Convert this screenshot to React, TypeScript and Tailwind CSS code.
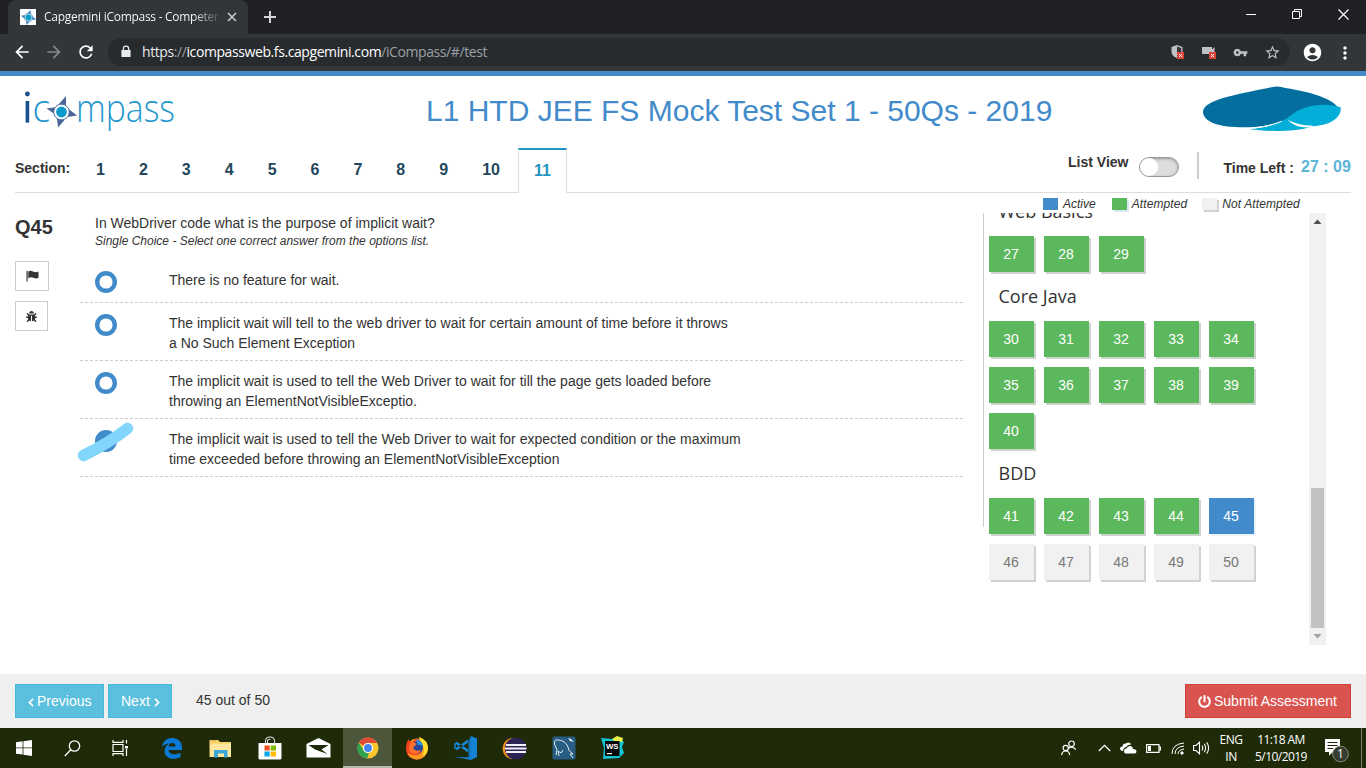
import type { ReactNode } from "react";
import { FaBug, FaPowerOff } from "react-icons/fa";
import { MdVpnKey, MdStarBorder, MdAccountCircle, MdMoreVert, MdArrowBack, MdArrowForward, MdRefresh } from "react-icons/md";

const ui = "font-['Open_Sans','Noto_Sans',sans-serif]";

function CompassStar({ size }: { size: number }) {
  return (
    <svg width={size} height={size} viewBox="0 0 32 32">
      <path d="M20 0L22 12L10 11ZM32 20L20 22L21 10ZM12 32L10 20L22 21ZM0 12L12 10L11 22Z" fill="#4a86b8" />
      <circle cx="16" cy="16" r="8.6" fill="#d8ebf5" stroke="#4a86b8" strokeWidth="1.4" />
      <circle cx="16" cy="16" r="6.4" fill="#0a9bc8" />
    </svg>
  );
}

function Browser() {
  return (
    <div className={`${ui} bg-[#202124]`}>
      <div className="flex h-[34px] items-end">
        <div className="ml-2 flex h-[34px] w-60 items-center rounded-t-lg bg-[#323639] pl-3">
          <div className="flex h-4 w-4 items-center justify-center bg-white"><CompassStar size={15} /></div>
          <div className="ml-2 w-[175px] overflow-hidden whitespace-nowrap bg-gradient-to-r from-white from-85% to-[#4b4f52] bg-clip-text text-[12px] tracking-[-0.28px] text-transparent">Capgemini iCompass - Competency</div>
          <svg className="ml-2" width="10" height="10" viewBox="0 0 10 10" stroke="#c8cacc" strokeWidth="1.6"><path d="M1 1L9 9M9 1L1 9" /></svg>
        </div>
        <svg className="mb-[11px] ml-4" width="12" height="12" viewBox="0 0 12 12" stroke="#d5d7d9" strokeWidth="2"><path d="M6 0V12M0 6H12" /></svg>
        <div className="mb-[14px] ml-auto mr-[17px] flex items-center gap-[36px]">
          <svg width="10" height="11" viewBox="0 0 10 11" stroke="#fff"><path d="M0 5.5H10" /></svg>
          <svg width="10" height="11" viewBox="0 0 10 11" stroke="#fff" fill="none"><path d="M.5 2.5H7.5V9.5H.5ZM2.5 2V.5H9.5V7.5H8" /></svg>
          <svg width="11" height="11" viewBox="0 0 11 11" stroke="#fff" strokeWidth="1.2"><path d="M.5 .5L10.5 10.5M10.5 .5L.5 10.5" /></svg>
        </div>
      </div>
      <div className="flex h-[37px] items-center bg-[#323639] pl-[12px]">
        <MdArrowBack className="-mt-px" size={20} color="#fff" />
        <MdArrowForward className="-mt-px ml-3" size={20} color="#85888a" />
        <MdRefresh className="-mt-px ml-3" size={20} color="#fff" />
        <div className="-mt-px ml-[12px] flex h-7 w-[1182px] items-center rounded-full bg-[#282b2e] pl-[13px] pr-[9px]">
          <svg className="-mt-px" width="10" height="13" viewBox="0 0 10 13"><path d="M1 5H9Q9.6 5 9.6 5.6V11.4Q9.6 12 9 12H1Q.4 12 .4 11.4V5.6Q.4 5 1 5Z" fill="#e8eaed" /><path d="M2.4 5.5V3.6Q2.4 1.2 5 1.2T7.6 3.6V5.5" fill="none" stroke="#e8eaed" strokeWidth="1.3" /></svg>
          <div className="ml-[11px] whitespace-nowrap text-[14px] leading-5 tracking-[-0.41px] text-[#9aa0a6]"><span className="text-[#e8eaed]">https</span>://<span className="text-white">icompassweb.fs.capgemini.com</span>/iCompass/#/test</div>
          <svg className="ml-auto" width="14" height="16" viewBox="0 0 14 16">
            <path d="M6 1L11.5 3V8Q11 12 6 14Q.8 12 .5 8V3Z" fill="#bfc2c5" /><path d="M6 2.5L10.2 4V8.2H6Z" fill="#34383b" />
            <rect x="6" y="8" width="7" height="7" fill="#db4437" /><path d="M8 10L11 13M11 10L8 13" stroke="#fff" />
          </svg>
          <svg className="ml-[17px]" width="15" height="16" viewBox="0 0 15 16">
            <path d="M0 3H10V5.5L12.5 3V10H0Z" fill="#bfc2c5" /><rect x="7" y="8" width="7" height="7" fill="#db4437" /><path d="M9 10L12 13M12 10L9 13" stroke="#fff" />
          </svg>
          <MdVpnKey className="ml-4" size={15} color="#bfc2c5" />
          <MdStarBorder className="ml-[16px]" size={17} color="#bfc2c5" />
        </div>
        <MdAccountCircle className="-mt-px ml-[12px]" size={21} color="#fff" />
        <MdMoreVert className="ml-3" size={20} color="#fff" />
      </div>
      <div className="h-[5px] bg-[#428bca]" />
    </div>
  );
}

function Logo() {
  return (
    <svg width="156" height="50" viewBox="22 86 156 50" overflow="visible" className="font-['Open_Sans',sans-serif]">
      <rect x="25.6" y="101" width="3.6" height="21.6" fill="#17508f" /><circle cx="27.4" cy="94" r="2.4" fill="#17508f" />
      <text x="32.5" y="122" fontSize="38" fontWeight="300" fill="#2497cd" textLength="17.5" lengthAdjust="spacingAndGlyphs">c</text>
      <path d="M66 96L66 105L58.5 104.5ZM77 115.5L67.5 117L68.5 109ZM58 127.5L57 118.5L65 119.5ZM46.5 108.5L57 107L54.5 114Z" fill="#4a6596" />
      <circle cx="61.5" cy="112" r="7.8" fill="#fff" stroke="#4a6fa5" strokeWidth="1" />
      <circle cx="61.5" cy="112" r="5.4" fill="#0b9acc" />
      <text x="76" y="122" fontSize="38" fontWeight="300" fill="#2497cd" textLength="99" lengthAdjust="spacingAndGlyphs">mpass</text>
    </svg>
  );
}

function Wave() {
  return (
    <svg width="138" height="46" viewBox="550 30 414 138" preserveAspectRatio="none">
      <path d="M550 108C552 72 640 58 755 34Q775 28 797 36C880 48 945 72 957 98L900 110L820 120Q770 148 705 153C620 158 552 145 550 108Z" fill="#046f9f" />
      <path d="M690 160C745 154 785 141 814 118C850 86 915 78 963 94C967 125 930 150 875 152C830 168 740 167 690 160Z" fill="#03aed8" />
      <path d="M690 157.5C735 153 765 145 786 136" stroke="#fff" strokeWidth="3" fill="none" />
      <path d="M804 131Q833 148 880 149L874 154Q826 157 804 131Z" fill="#fff" />
      <path d="M874 152L935 143L900 156Z" fill="#fff" />
    </svg>
  );
}

function Tabs() {
  return (
    <div className="flex h-[45px] items-end text-[16px] font-bold leading-[22px] text-[#23475c]">
      {[1, 2, 3, 4, 5, 6, 7, 8, 9, 10].map((n) => (
        <div key={n} className="mr-[2px] px-4 pb-[12px]">{n}</div>
      ))}
      <div className="h-[45px] border border-b-0 border-t-2 border-[#ddd] border-t-[#1f95c1] bg-white px-[15px] pt-[10px] text-[#1f95c1]">11</div>
    </div>
  );
}

function Header() {
  return (
    <div className="mx-[15px] h-[117px] border-b border-[#ddd]">
      <div className="flex h-[72px] items-start">
        <div className="ml-[7px] mt-[10px]"><Logo /></div>
        <div className="ml-[248px] mt-[14px] w-[640px] whitespace-nowrap text-[30px] leading-[42px] text-[#428bca]">L1 HTD JEE FS Mock Test Set 1 - 50Qs - 2019</div>
        <div className="ml-auto mr-[10px] mt-[10px]"><Wave /></div>
      </div>
      <div className="flex h-[45px]">
        <div className="mt-[10px] w-[65px] text-[14px] font-bold leading-5">Section:</div>
        <Tabs />
        <div className="ml-auto flex">
          <div className="mt-1 text-[14px] font-bold leading-5">List View</div>
          <div className="ml-[11px] mt-[9px] h-5 w-[40px] rounded-full border border-[#999] bg-[#ddd] shadow-[inset_0_1px_3px_#999]">
            <div className="h-[18px] w-[18px] rounded-full bg-white" />
          </div>
          <div className="ml-[18px] mt-1 h-[27px] w-[2px] bg-[#ccc]" />
          <div className="ml-6 mt-[10px] text-[14px] font-bold leading-5">Time Left :</div>
          <div className="ml-[7px] mt-[9px] w-[50px] whitespace-nowrap text-[16px] font-bold leading-5 text-[#5bb5d6]">27 : 09</div>
        </div>
      </div>
    </div>
  );
}

const options = [
  ["There is no feature for wait."],
  ["The implicit wait will tell to the web driver to wait for certain amount of time before it throws", "a No Such Element Exception"],
  ["The implicit wait is used to tell the Web Driver to wait for till the page gets loaded before", "throwing an ElementNotVisibleExceptio."],
  ["The implicit wait is used to tell the Web Driver to wait for expected condition or the maximum", "time exceeded before throwing an ElementNotVisibleException"],
];

function Question() {
  return (
    <div className="w-[883px]">
      <div className="pl-[15px] pt-[20px] text-[14px] leading-5">In WebDriver code what is the purpose of implicit wait?</div>
      <div className="pl-[15px] text-[12px] italic leading-[16px]">Single Choice - Select one correct answer from the options list.</div>
      <div className="mt-[11px]">
        {options.map((lines, i) => (
          <div key={i} className="flex min-h-[43px] border-b border-dashed border-[#ccc] pb-[7px] pl-[15px] pt-[10px]">
            {i < 3 ? (
              <svg className="mt-[1px]" width="22" height="22" viewBox="0 0 22 22"><circle cx="11" cy="11" r="8.8" fill="#fff" stroke="#428bca" strokeWidth="4.4" /></svg>
            ) : (
              <div className="relative mt-[1px] h-[22px] w-[22px] rounded-full bg-[#428bca]">
                <svg className="absolute left-[-19px] top-[-9px]" width="60" height="44" viewBox="0 0 60 44">
                  <path d="M7.5 34.5Q33 22 51.5 7.5" fill="none" stroke="#82d6fc" strokeWidth="11.5" strokeLinecap="round" />
                </svg>
              </div>
            )}
            <div className="ml-[52px] text-[14px] leading-5">
              {lines.map((l) => <div key={l} className="whitespace-nowrap">{l}</div>)}
            </div>
          </div>
        ))}
      </div>
    </div>
  );
}

function Cells({ from, to }: { from: number; to: number }) {
  const nums = Array.from({ length: to - from + 1 }, (_, i) => from + i);
  return (
    <div className="grid grid-cols-[repeat(5,45px)] gap-[10px]">
      {nums.map((n) => {
        const tone = n < 45
          ? "bg-[#5cb85c] text-white shadow-[2px_2px_0_#ccd3cc]"
          : n === 45
            ? "bg-[#428bca] text-white shadow-[2px_2px_0_#eaf3fa]"
            : "bg-[#f1f1f1] text-[#777] shadow-[2px_2px_0_#d2d2d2]";
        return <div key={n} className={`h-9 w-[45px] pr-px text-center text-[14px] leading-9 ${tone}`}>{n}</div>;
      })}
    </div>
  );
}

function Heading({ children }: { children: ReactNode }) {
  return <div className={`${ui} flex h-[49px] items-center pl-[9.5px] text-[18px] text-[#333]`}>{children}</div>;
}

function Palette() {
  return (
    <div className="ml-[20px] w-[343px]">
      <div className="flex h-[20px] items-center pl-[60px] pt-[2px] text-[12px] italic">
        <div className="h-3 w-[15px] bg-[#428bca]" /><span className="ml-[5px]">Active</span>
        <div className="ml-4 h-3 w-[15px] bg-[#5cb85c] shadow-[2px_2px_0_#d8e8f8]" /><span className="ml-[5px] tracking-[0.1px]">Attempted</span>
        <div className="ml-[15px] h-3 w-[15px] bg-[#f1f1f1] shadow-[2px_2px_0_#d2d2d2]" /><span className="ml-[5px] tracking-[0.1px]">Not Attempted</span>
      </div>
      <div className="flex h-[432px] overflow-hidden">
        <div className="h-[314px] w-px bg-[#ccc]" />
        <div className="ml-[5px] h-[432px] w-[320px] overflow-hidden">
          <div className="-mt-[26px]"><Heading>Web Basics</Heading></div>
          <Cells from={27} to={29} />
          <Heading>Core Java</Heading>
          <Cells from={30} to={40} />
          <Heading>BDD</Heading>
          <Cells from={41} to={50} />
        </div>
        <div className="flex h-[432px] w-[17px] flex-col items-center bg-[#f1f1f1]">
          <svg width="17" height="17" viewBox="0 0 17 17"><path d="M8.5 6.5L12.5 11H4.5Z" fill="#505050" /></svg>
          <div className="mt-[258px] h-[140px] w-[13px] bg-[#c1c1c1]" />
          <svg width="17" height="17" viewBox="0 0 17 17"><path d="M4.5 6H12.5L8.5 10.5Z" fill="#a0a0a0" /></svg>
        </div>
      </div>
    </div>
  );
}

function Flag() {
  return (
    <svg width="13" height="12" viewBox="0 0 13 12" fill="#333">
      <rect x=".5" y="1" width="1.2" height="10.5" /><path d="M2.3 1.5Q4.5 .2 7 1.5T12.5 1.5V7.8Q10 9 7.5 7.8T2.3 8.2Z" />
    </svg>
  );
}

function Footer() {
  return (
    <div className="flex h-[54px] items-center bg-[#efefef] px-[15px] text-[14px]">
      <div className="flex h-[34px] w-[89px] items-center border border-[#46b8da] bg-[#5bc0de] pl-3 text-white">
        <svg className="mt-[2px]" width="6" height="9" viewBox="0 0 6 9" fill="none" stroke="#fff" strokeWidth="1.7"><path d="M5 .8L1.4 4.5L5 8.2" /></svg>
        <span className="ml-[3px]">Previous</span>
      </div>
      <div className="ml-1 flex h-[34px] w-16 items-center border border-[#46b8da] bg-[#5bc0de] pl-3 text-white">
        Next
        <svg className="ml-[4px] mt-[2px]" width="6" height="9" viewBox="0 0 6 9" fill="none" stroke="#fff" strokeWidth="1.7"><path d="M1 .8L4.6 4.5L1 8.2" /></svg>
      </div>
      <div className="ml-6 -mt-[1px]">45 out of 50</div>
      <div className="ml-auto flex h-[34px] w-[166px] items-center border border-[#d43f3a] bg-[#d9534f] pl-3 text-white"><FaPowerOff size={13} className="mr-[3px]" />Submit Assessment</div>
    </div>
  );
}

function Task({ children, active, narrow }: { children: ReactNode; active?: boolean; narrow?: boolean }) {
  return <div className={`flex h-10 items-center justify-center ${narrow ? "w-12" : "w-[49px]"} ${active ? "border-b-2 border-[#b3b8ab] bg-[#4c563b]" : ""}`}>{children}</div>;
}

function Taskbar() {
  return (
    <div className={`${ui} flex h-10 items-center bg-[#1e2a08] text-white`}>
      <div className="flex w-[147px]">
        <Task narrow><svg width="16" height="16" viewBox="0 0 16 16" fill="#fff"><path d="M0 2.2L6.6 1.3V7.5H0ZM7.4 1.2L16 0V7.5H7.4ZM0 8.3H6.6V14.6L0 13.7ZM7.4 8.3H16V16L7.4 14.8Z" /></svg></Task>
        <Task narrow><svg width="17" height="17" viewBox="0 0 17 17" fill="none" stroke="#fff" strokeWidth="1.3"><circle cx="10.5" cy="6" r="5.2" /><path d="M6.8 9.8L.8 16" /></svg></Task>
        <Task narrow><svg width="17" height="16" viewBox="0 0 17 16" fill="none" stroke="#fff" strokeWidth="1.2"><path d="M1 4.5H11V11.5H1ZM1 0V2.3H11V0M1 16V13.7H11V16M14.5 0V3.5M14.5 9V16" /><path d="M13 6H16V8.5H13Z" fill="#fff" stroke="none" /></svg></Task>
      </div>
      <Task>
        <svg width="20" height="21" viewBox="0 0 20 21"><path fillRule="evenodd" fill="#0b7ad6" d="M0 9C1 3 5 0 10 0C16 0 20 4 20 9.5V12H6.5C6.8 15 9.5 16.3 12.5 16.3C15 16.3 17 15.6 18.5 14.8V19C16.5 20.2 14 20.8 11.5 20.8C6 20.8 2.5 17.5 2.5 13C2.5 9.5 4.5 7 7.5 5.6C4.5 5.8 1.8 7 0 9ZM6.6 8.6H13.6C13.5 6.3 12.3 5 10.2 5C8.2 5 6.9 6.5 6.6 8.6Z" /></svg>
      </Task>
      <Task>
        <svg width="23" height="19" viewBox="0 0 23 19"><path d="M.5 1H9L11 3H22V18H.5Z" fill="#f7d673" /><path d="M1 5H22V18H1Z" fill="#ffe79d" /><path d="M5 18.5V11H18.5V18.5H15V14.5H9V18.5Z" fill="#3ba7d8" /><path d="M2 1.5H7V2.5H2Z" fill="#e8a92e" /></svg>
      </Task>
      <Task>
        <svg width="24" height="24" viewBox="0 0 24 24"><path d="M.5 7H23.5V22Q23.5 23.5 22 23.5H2Q.5 23.5 .5 22Z" fill="#fff" /><path d="M7.5 8V4.5Q8 1 12 1T16.5 4.5V8M9.5 7V4.5Q10 3 12.5 3.2" fill="none" stroke="#ddd" strokeWidth="1.1" /><path d="M6.5 9.5H11.7V14.5H6.5Z" fill="#f25022" /><path d="M12.7 9.5H18V14.5H12.7Z" fill="#7fba00" /><path d="M6.5 15.5H11.7V20.5H6.5Z" fill="#00a4ef" /><path d="M12.7 15.5H18V20.5H12.7Z" fill="#ffb900" /></svg>
      </Task>
      <Task><svg width="25" height="20" viewBox="0 0 25 20"><path d="M.5 6L12.5 0L24.5 6V19.5H.5Z" fill="#fff" /><path d="M2.5 7H22.5L15.5 11.5L21.5 16L9 11.5Z" fill="#1e2a08" /></svg></Task>
      <Task active>
        <svg className="-mb-px" width="22" height="22" viewBox="0 0 48 48"><circle cx="24" cy="24" r="23" fill="#fbc62c" /><path d="M24 1A23 23 0 0 1 44 13H24A11 11 0 0 0 14 19L4 12A23 23 0 0 1 24 1Z" fill="#e04a3a" /><path d="M4 12L14.5 29.5A11 11 0 0 0 26 35L22 47A23 23 0 0 1 4 12Z" fill="#2fa350" /><circle cx="24" cy="24" r="11" fill="#fff" /><circle cx="24" cy="24" r="8.6" fill="#4385f4" /></svg>
      </Task>
      <Task>
        <svg width="24" height="24" viewBox="0 0 24 24"><circle cx="12" cy="13" r="10.5" fill="#ff9723" /><path d="M12 2Q14 5 19 5Q24 10 22.5 16Q19 23 11 23.5Q2 22 1 14Q1 7 3.5 3Q4 6 7 6Z" fill="#f6421f" /><path d="M14 1Q23 4 23 13Q22 22 12 23.5Q3 22 3 17Q10 21 15 18Q20 12 14 1Z" fill="#ff9a20" /><path d="M14 1Q23 4 23 13Q21 19 18 20Q20 12 17 7Q15 5 14 1Z" fill="#ffe02c" /><circle cx="12" cy="11.5" r="6" fill="#26469b" /><path d="M11 3Q18 5 18 11Q16 8 13 9Z" fill="#2696e5" /><path d="M5 7L8 6L12 8L9.5 10L8 12Q10 16 16 14Q14 18 10 18Q4 17 4 12Z" fill="#ff702c" /></svg>
      </Task>
      <Task>
        <svg width="25" height="24" viewBox="0 0 25 24"><path d="M18 0L24 2.5V21L18 24L1 20.8L18 21.5Z" fill="#1483d2" /><path d="M18 0V23L15.5 22V5Z" fill="#0f76c2" /><path d="M2 7.5L15 16.5V13.3L4 5.8ZM2 12.5L15 3.5V6.7L4 14.2Z" fill="#1687d8" /><path d="M2 7V13" stroke="#1687d8" strokeWidth="1.5" /></svg>
      </Task>
      <Task>
        <svg width="25" height="23" viewBox="0 0 25 23"><circle cx="11" cy="11.5" r="10.5" fill="#f7941e" /><circle cx="13.7" cy="11.5" r="10.8" fill="#2c2255" /><path d="M4 8H24M3 11.5H24.5M4 15H24" stroke="#f2f0f7" strokeWidth="1.9" /></svg>
      </Task>
      <Task>
        <svg width="24" height="24" viewBox="0 0 24 24"><rect x=".5" y=".5" width="23" height="23" rx="1.5" fill="#275d83" /><path d="M4 19L5 14L2.5 8Q2 3 6 4Q13 4 16 11Q16 15 21 18L18 18L21 22M7 20L6 15L9 17L11 14" stroke="#e0eaf0" strokeWidth="1" fill="none" /><path d="M16 2L18 5L22 6L19 3Z" fill="#e0eaf0" /></svg>
      </Task>
      <Task>
        <svg width="25" height="24" viewBox="0 0 25 24" className="font-['Liberation_Sans',sans-serif]"><path d="M1 2L12 3L19 1L24 6L22 11L24 17L19 22L3 23L4 12Z" fill="#11c6d2" /><path d="M12 3L17 0L23 2L22 6L15 6Z" fill="#e8ef4a" /><path d="M5 5H19.5V20H5Z" fill="#050505" /><text x="6" y="13" fontSize="8" fontWeight="700" fill="#fff" textLength="12.5" lengthAdjust="spacingAndGlyphs">WS</text><path d="M7 17H12V18.2H7Z" fill="#fff" /></svg>
      </Task>
      <div className="ml-auto flex h-10 items-center">
        <svg width="16" height="16" viewBox="0 0 16 16" fill="none" stroke="#fff" strokeWidth="1.2"><circle cx="10.5" cy="3.8" r="2.8" /><path d="M7.5 8.5Q11 5.5 14.8 9.5" /><circle cx="4.7" cy="8" r="2.6" /><path d="M.7 15Q1 11 4.7 11T8.6 15" /></svg>
        <svg className="ml-[21px]" width="13" height="8" viewBox="0 0 13 8" fill="none" stroke="#fff" strokeWidth="1.3"><path d="M.8 7L6.5 1.3L12.2 7" /></svg>
        <svg className="ml-[9px]" width="17" height="12" viewBox="0 0 17 12" fill="#fff"><path d="M3 9Q0 8.5 0 6.5T2.5 4.5Q3 1 6 1.5Q9-1 11.5 2.5Q8 2 6 5Q3.5 5.5 3 9Z" /><path d="M5.5 11.5Q3.5 11 4 8.8T6.3 6.5Q8 3.5 10.5 4T13 6.9Q16.5 7 16.5 9.3T14.5 11.5Z" /></svg>
        <svg className="ml-[9px]" width="15" height="9" viewBox="0 0 15 9"><path d="M.6 .6H13V8.4H.6ZM13 3H14.5V6H13" fill="none" stroke="#fff" strokeWidth="1.2" /><path d="M2 2H5V7H2Z" fill="#fff" /></svg>
        <svg className="ml-[10px]" width="14" height="13" viewBox="0 0 14 13" fill="none" stroke="#fff" strokeWidth="1"><path d="M1 12Q1 2 13 1M4 12Q4 5 13 4M7 12Q7 8 13 7" /><circle cx="11" cy="11" r="1.2" fill="#fff" /></svg>
        <svg className="ml-[8px]" width="17" height="14" viewBox="0 0 17 14" fill="none" stroke="#fff" strokeWidth="1.1"><path d="M.6 4.5H3L6.5 1.2V12.8L3 9.5H.6ZM9 4.5Q10.5 7 9 9.5M11.3 2.8Q13.8 7 11.3 11.2M13.7 1.3Q17.5 7 13.7 12.7" /></svg>
        <div className="ml-[8px] w-[26px] whitespace-nowrap text-center text-[12px] leading-[17px] tracking-[-0.4px]">ENG<br />IN</div>
        <div className="ml-[9px] w-[56px] whitespace-nowrap text-center text-[12px] leading-[17px] tracking-[-0.55px]">11:18 AM<br />5/10/2019</div>
        <svg className="ml-[15px] mr-[11px] mt-[6px]" width="26" height="25" viewBox="0 0 26 25"><path d="M1 0H16V13H9L5 16.5V13H1Z" fill="#fff" /><path d="M3.5 3.5H13.5M3.5 6.5H13.5M3.5 9.5H9" stroke="#1e2a08" strokeWidth="1.1" /><circle cx="16.5" cy="15" r="7.8" fill="#353d31" stroke="#858b7c" /><text x="16.5" y="19.2" fontSize="12" fill="#fff" textAnchor="middle">1</text></svg>
        <div className="mr-[4px] h-10 w-px bg-[#798170]" />
      </div>
    </div>
  );
}

export default function App() {
  return (
    <div className="flex h-[768px] w-[1366px] flex-col overflow-hidden bg-white font-['Liberation_Sans',Arial,sans-serif] text-[#333]">
      <Browser />
      <Header />
      <div className="flex h-[481px] pl-[15px]">
        <div className="w-[65px] pt-[24px]">
          <div className="text-[20px] font-bold leading-5">Q45</div>
          <div className="mt-6 flex h-[30px] w-[34px] items-center justify-center border border-[#ccc]"><Flag /></div>
          <div className="mt-[10px] flex h-[30px] w-[33px] items-center justify-center border border-[#ccc]"><FaBug size={11} /></div>
        </div>
        <Question />
        <Palette />
      </div>
      <Footer />
      <Taskbar />
    </div>
  );
}
